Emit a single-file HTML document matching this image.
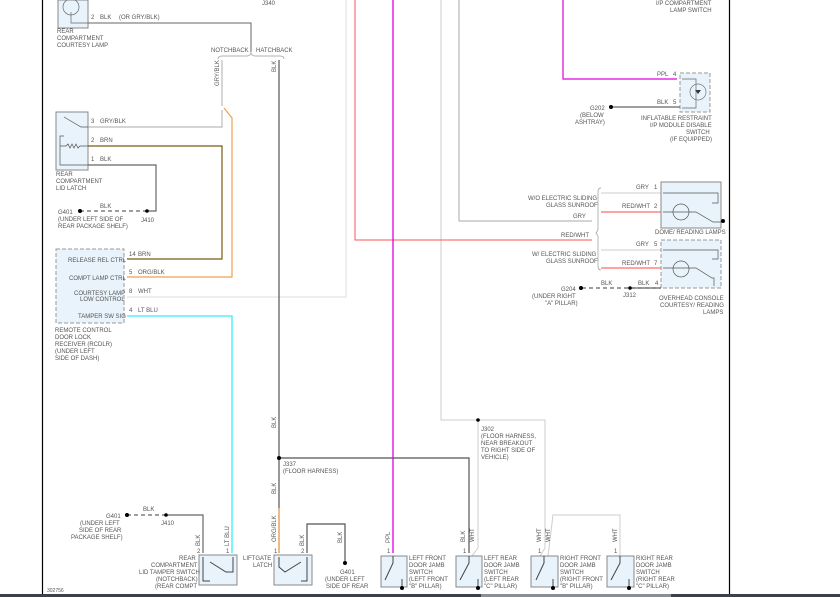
<!DOCTYPE html>
<html><head><meta charset="utf-8"><style>
html,body{margin:0;padding:0;background:#fff;width:840px;height:597px;overflow:hidden}
svg{display:block}
text{font-family:"Liberation Sans",sans-serif;font-size:6px;fill:#555}
.bx{fill:#e8f3fb;stroke:#888;stroke-width:1}
.db{fill:#e8f3fb;stroke:#999;stroke-width:1;stroke-dasharray:4 2}
</style></head><body>
<svg width="840" height="597" viewBox="0 0 840 597" xmlns="http://www.w3.org/2000/svg">
<rect width="840" height="597" fill="#fff"/>
<line x1="42.5" y1="0" x2="42.5" y2="594" stroke="#000" stroke-width="1.2"/>
<line x1="729.5" y1="0" x2="729.5" y2="594" stroke="#000" stroke-width="1.2"/>
<rect x="0" y="594" width="840" height="3" fill="#3c414c"/>
<rect x="481" y="594" width="190" height="3" fill="#8a9098"/>
<polyline points="127,297 346,297 346,0" fill="none" stroke="#ddd" stroke-width="1"/>
<polyline points="441,0 441,420 545,420 545,548 540,556" fill="none" stroke="#ccc" stroke-width="1"/>
<line x1="478" y1="420" x2="478" y2="548" stroke="#ccc"/>
<polyline points="478,548 472,556" fill="none" stroke="#ccc"/>
<polyline points="548,556 553,515 620,515 620,556" fill="none" stroke="#ccc"/>
<circle cx="478" cy="420" r="1.8" fill="#000"/>
<text x="481" y="431">J302</text><text x="481" y="438">(FLOOR HARNESS,</text><text x="481" y="445">NEAR BREAKOUT</text><text x="481" y="452">TO RIGHT SIDE OF</text><text x="481" y="459">VEHICLE)</text>
<polyline points="459,0 459,221 592,221" fill="none" stroke="#aaa" stroke-width="1"/>
<polyline points="355,0 355,240 592,240" fill="none" stroke="#f55" stroke-width="1"/>
<line x1="393" y1="0" x2="393" y2="553" stroke="#e000e0" stroke-width="1.3"/>
<polyline points="563,0 563,79 677,79" fill="none" stroke="#e000e0" stroke-width="1.2"/>
<text x="656" y="5">I/P COMPARTMENT</text><text x="670" y="12">LAMP SWITCH</text>
<rect x="680" y="73" width="30" height="39" class="db"/>
<circle cx="698" cy="92" r="8" fill="none" stroke="#777" stroke-width=".7"/>
<path d="M695,90 h6 l-3,4z" fill="#333"/>
<polyline points="682,79 696,79 696,108 682,108" fill="none" stroke="#666" stroke-width=".7"/>
<text x="657" y="76">PPL</text><text x="673" y="76">4</text>
<text x="657" y="104">BLK</text><text x="673" y="104">5</text>
<line x1="612" y1="107" x2="680" y2="107" stroke="#666" stroke-width="1.2"/>
<circle cx="611" cy="107" r="2" fill="#000"/>
<text x="590" y="110">G202</text><text x="580" y="117">(BELOW</text><text x="575" y="124">ASHTRAY)</text>
<text x="641" y="120">INFLATABLE RESTRAINT</text><text x="650" y="127">I/P MODULE DISABLE</text><text x="686" y="134">SWITCH</text><text x="670" y="141">(IF EQUIPPED)</text>
<path d="M601,188 q-3,0 -3,4 v38 l-2,3 l2,3 v30 q0,4 3,4" fill="none" stroke="#999" stroke-width=".7"/>
<text x="528" y="200">W/O ELECTRIC SLIDING</text><text x="546" y="207">GLASS SUNROOF</text>
<text x="573" y="218">GRY</text><text x="561" y="237">RED/WHT</text>
<text x="532" y="256">W/ ELECTRIC SLIDING</text><text x="546" y="263">GLASS SUNROOF</text>
<line x1="601" y1="193" x2="661" y2="193" stroke="#ccc"/>
<line x1="601" y1="212" x2="661" y2="212" stroke="#f44"/>
<line x1="601" y1="250" x2="661" y2="250" stroke="#ccc"/>
<line x1="601" y1="268" x2="661" y2="268" stroke="#f44"/>
<text x="636" y="189">GRY</text><text x="654" y="189">1</text>
<text x="622" y="208">RED/WHT</text><text x="654" y="208">2</text>
<text x="636" y="246">GRY</text><text x="654" y="246">5</text>
<text x="622" y="265">RED/WHT</text><text x="654" y="265">7</text>
<rect x="661" y="182" width="60" height="46" class="bx"/>
<rect x="661" y="240" width="60" height="48" class="db"/>
<g fill="none" stroke="#555" stroke-width=".7">
<circle cx="681" cy="212" r="8"/><circle cx="681" cy="269" r="8"/>
<polyline points="663,193 718,193 718,203 712,203"/><polyline points="663,250 718,250 718,259 712,259"/>
<polyline points="663,212 696,212 713,222 722,222"/><polyline points="663,268 696,268 712,278 714,278 714,286"/>
</g>
<circle cx="723" cy="221" r="2" fill="#000"/>
<text x="655" y="234">DOME/ READING LAMPS</text>
<line x1="582" y1="288" x2="661" y2="288" stroke="#666" stroke-width="1.2" stroke-dasharray="4 3"/>
<line x1="630" y1="288" x2="661" y2="288" stroke="#666" stroke-width="1.2"/>
<circle cx="581" cy="288" r="2" fill="#000"/><circle cx="630" cy="288" r="1.8" fill="#000"/>
<text x="601" y="285">BLK</text><text x="638" y="285">BLK</text><text x="655" y="285">4</text>
<text x="561" y="291">G204</text><text x="532" y="298">(UNDER RIGHT</text><text x="545" y="305">"A" PILLAR)</text><text x="623" y="297">J312</text>
<text x="659" y="300">OVERHEAD CONSOLE</text><text x="660" y="307">COURTESY/ READING</text><text x="703" y="314">LAMPS</text>
<rect x="58" y="0" width="30" height="28" class="bx"/>
<circle cx="71" cy="7" r="8" fill="none" stroke="#666" stroke-width=".7"/>
<polyline points="71,12 71,23 88,23" fill="none" stroke="#666" stroke-width=".7"/>
<text x="57" y="33">REAR</text><text x="57" y="40">COMPARTMENT</text><text x="57" y="47">COURTESY LAMP</text>
<text x="91" y="19">2</text><text x="100" y="19">BLK</text><text x="119" y="19">(OR GRY/BLK)</text>
<text x="262" y="5">J340</text>
<polyline points="88,23 251,23 251,52" fill="none" stroke="#666" stroke-width="1"/>
<path d="M218,59 q0,-3 4,-3 h25 q3,0 4,-3 q1,3 4,3 h25 q4,0 4,3" fill="none" stroke="#999" stroke-width=".7"/>
<text x="211" y="52">NOTCHBACK</text><text x="256" y="52">HATCHBACK</text>
<line x1="222" y1="60" x2="222" y2="106" stroke="#bbb" stroke-width="1.2"/>
<text transform="translate(219,86) rotate(-90)">GRY/BLK</text>
<text transform="translate(276,72) rotate(-90)">BLK</text>
<polyline points="222,110 222,127 88,127" fill="none" stroke="#bbb" stroke-width="1.2"/>
<polyline points="224,108 232,118 232,277 127,277" fill="none" stroke="#f0a050" stroke-width="1.2"/>
<line x1="279" y1="60" x2="279" y2="508" stroke="#555" stroke-width="1.2"/>
<line x1="279" y1="508" x2="279" y2="553" stroke="#e08a3a" stroke-width="1.2"/>
<rect x="56" y="112" width="32" height="58" class="bx"/>
<g fill="none" stroke="#555" stroke-width=".7"><polyline points="64,117 81,127 88,127"/><polyline points="64,136 60,136 60,165 88,165"/><path d="M60,146 h6 l2,-2 l2,4 l2,-4 l2,4 l2,-4 l2,4 l2,-2 h8"/></g>
<text x="91" y="123">3</text><text x="100" y="123">GRY/BLK</text>
<text x="91" y="142">2</text><text x="100" y="142">BRN</text>
<text x="91" y="161">1</text><text x="100" y="161">BLK</text>
<text x="56" y="176">REAR</text><text x="56" y="183">COMPARTMENT</text><text x="56" y="190">LID LATCH</text>
<polyline points="88,146 222,146 222,259 127,259" fill="none" stroke="#7a5a10" stroke-width="1.2"/>
<polyline points="88,165 156,165 156,211 147,211" fill="none" stroke="#666" stroke-width="1.2"/>
<line x1="80" y1="211" x2="147" y2="211" stroke="#666" stroke-width="1.2" stroke-dasharray="4 3"/>
<circle cx="80" cy="211" r="2" fill="#000"/><circle cx="147" cy="211" r="1.8" fill="#000"/>
<text x="100" y="208">BLK</text><text x="58" y="214">G401</text><text x="58" y="221">(UNDER LEFT SIDE OF</text><text x="58" y="228">REAR PACKAGE SHELF)</text><text x="141" y="222">J410</text>
<rect x="56" y="249" width="68" height="74" class="db"/>
<text x="68" y="262">RELEASE REL CTRL</text><text x="69" y="280">COMPT LAMP CTRL</text><text x="74" y="295">COURTESY LAMP</text><text x="80" y="301">LOW CONTROL</text><text x="78" y="318">TAMPER SW SIG</text>
<text x="129" y="256">14</text><text x="138" y="256">BRN</text>
<text x="129" y="274">5</text><text x="138" y="274">ORG/BLK</text>
<text x="129" y="293">8</text><text x="138" y="293">WHT</text>
<text x="129" y="312">4</text><text x="138" y="312">LT BLU</text>
<text x="55" y="332">REMOTE CONTROL</text><text x="55" y="339">DOOR LOCK</text><text x="55" y="346">RECEIVER (RCDLR)</text><text x="55" y="353">(UNDER LEFT</text><text x="55" y="360">SIDE OF DASH)</text>
<polyline points="127,316 232,316 232,553" fill="none" stroke="#3ef" stroke-width="1.3"/>
<polyline points="279,458 469,458 469,553" fill="none" stroke="#555" stroke-width="1.2"/>
<circle cx="279" cy="458" r="2" fill="#000"/>
<text x="283" y="466">J337</text><text x="283" y="473">(FLOOR HARNESS)</text>
<text transform="translate(276,428) rotate(-90)">BLK</text>
<text transform="translate(276,494) rotate(-90)">BLK</text>
<text transform="translate(276,542) rotate(-90)">ORG/BLK</text>
<polyline points="166,515 203,515 203,553" fill="none" stroke="#666" stroke-width="1.2"/>
<line x1="127" y1="515" x2="166" y2="515" stroke="#666" stroke-width="1.2" stroke-dasharray="4 3"/>
<circle cx="127" cy="515" r="2" fill="#000"/><circle cx="166" cy="515" r="1.8" fill="#000"/>
<text x="143" y="511">BLK</text><text x="106" y="518">G401</text><text x="80" y="525">(UNDER LEFT</text><text x="79" y="532">SIDE OF REAR</text><text x="71" y="539">PACKAGE SHELF)</text><text x="161" y="525">J410</text>
<text transform="translate(200,546) rotate(-90)">BLK</text><text transform="translate(229,546) rotate(-90)">LT BLU</text>
<text x="197" y="553">2</text><text x="226" y="553">1</text><text x="274" y="553">1</text><text x="301" y="553">2</text>
<text x="387" y="553">1</text><text x="463" y="553">1</text><text x="538" y="553">1</text><text x="614" y="553">1</text>
<rect x="199" y="555" width="38" height="30" class="bx"/>
<polyline points="210,562 226,572 233,572 233,557" fill="none" stroke="#444" stroke-width="1"/><polyline points="203,557 203,581 210,581" fill="none" stroke="#444" stroke-width="1"/>
<text x="179" y="560">REAR</text><text x="151" y="567">COMPARTMENT</text><text x="139" y="574">LID TAMPER SWITCH</text><text x="156" y="581">(NOTCHBACK)</text><text x="155" y="588">(REAR COMPT</text>
<text x="243" y="560">LIFTGATE</text><text x="253" y="567">LATCH</text>
<rect x="274" y="555" width="38" height="30" class="bx"/>
<polyline points="279,557 279,567 285,572 301,562" fill="none" stroke="#444" stroke-width="1"/><polyline points="301,581 307,581 307,557" fill="none" stroke="#444" stroke-width="1"/>
<polyline points="307,553 307,524 345,524 345,562" fill="none" stroke="#555" stroke-width="1.2"/>
<circle cx="345" cy="563" r="2" fill="#000"/>
<text transform="translate(304,546) rotate(-90)">BLK</text><text transform="translate(342,543) rotate(-90)">BLK</text>
<text x="340" y="574">G401</text><text x="325" y="581">(UNDER LEFT</text><text x="326" y="588">SIDE OF REAR</text>
<rect x="381" y="556" width="26" height="31" class="bx"/>
<rect x="456" y="556" width="26" height="31" class="bx"/>
<rect x="531" y="556" width="27" height="31" class="bx"/>
<rect x="607" y="556" width="27" height="31" class="bx"/>
<g fill="none" stroke="#444" stroke-width="1">
<polyline points="393,556 393,563 385,580"/><polyline points="402,579 402,590"/>
<polyline points="469,556 469,563 460,580"/><polyline points="478,579 478,590"/>
<polyline points="544,556 544,563 536,580"/><polyline points="553,579 553,590"/>
<polyline points="620,556 620,563 611,580"/><polyline points="629,579 629,590"/>
</g>
<g fill="#000"><circle cx="402" cy="588" r="2"/><circle cx="478" cy="588" r="2"/><circle cx="553" cy="588" r="2"/><circle cx="629" cy="588" r="2"/></g>
<text transform="translate(390,543) rotate(-90)">PPL</text>
<text transform="translate(465,542) rotate(-90)">BLK</text><text transform="translate(474,542) rotate(-90)">WHT</text>
<text transform="translate(541,542) rotate(-90)">WHT</text><text transform="translate(550,542) rotate(-90)">WHT</text>
<text transform="translate(617,542) rotate(-90)">WHT</text>
<text x="409" y="560">LEFT FRONT</text><text x="409" y="567">DOOR JAMB</text><text x="409" y="574">SWITCH</text><text x="409" y="581">(LEFT FRONT</text><text x="409" y="588">"B" PILLAR)</text>
<text x="484" y="560">LEFT REAR</text><text x="484" y="567">DOOR JAMB</text><text x="484" y="574">SWITCH</text><text x="484" y="581">(LEFT REAR</text><text x="484" y="588">"C" PILLAR)</text>
<text x="560" y="560">RIGHT FRONT</text><text x="560" y="567">DOOR JAMB</text><text x="560" y="574">SWITCH</text><text x="560" y="581">(RIGHT FRONT</text><text x="560" y="588">"B" PILLAR)</text>
<text x="636" y="560">RIGHT REAR</text><text x="636" y="567">DOOR JAMB</text><text x="636" y="574">SWITCH</text><text x="636" y="581">(RIGHT REAR</text><text x="636" y="588">"C" PILLAR)</text>
<text x="47" y="592" style="font-size:5px">302756</text>
</svg>
</body></html>
